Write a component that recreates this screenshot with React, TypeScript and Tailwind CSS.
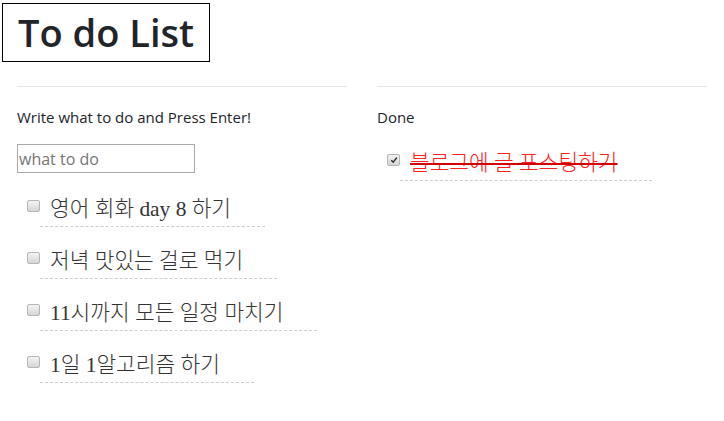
type Todo = {
    id: number;
    text: string;
    done: boolean;
};

const todos: Todo[] = [
    { id: 1, text: "영어 회화 day 8 하기", done: false },
    { id: 2, text: "저녁 맛있는 걸로 먹기", done: false },
    { id: 3, text: "11시까지 모든 일정 마치기", done: false },
    { id: 4, text: "1일 1알고리즘 하기", done: false },
    { id: 5, text: "블로그에 글 포스팅하기", done: true },
];

function Box({ checked }: { checked: boolean }) {
    return (
        <span className="mt-[5px] ml-[10px] flex h-[12px] w-[13px] shrink-0 items-center justify-center rounded-[2px] border border-[#b5b5b5] bg-gradient-to-b from-[#f4f4f4] to-[#d6d6d6]">
            {checked && (
                <svg viewBox="0 0 10 10" className="h-[8px] w-[8px]">
                    <path
                        d="M1.5 5.2 L4 7.6 L8.6 1.8"
                        fill="none"
                        stroke="#333"
                        strokeWidth={1.8}
                    />
                </svg>
            )}
        </span>
    );
}

function Item({ todo }: { todo: Todo }) {
    return (
        <li className="mb-[20px] flex items-start">
            <Box checked={todo.done} />
            <span
                className={`inline-block border-b border-dashed border-[#cfcfcf] pr-[34px] pb-[3px] pl-[10px] text-[21.4px] leading-[28px] font-light font-['Liberation_Serif','Noto_Sans_CJK_KR',serif] ${
                    todo.done
                        ? "text-[#ff2020] line-through decoration-[#d40000] decoration-2"
                        : "text-[#333]"
                }`}
            >
                {todo.text}
            </span>
        </li>
    );
}

export default function App() {
    const pending = todos.filter((t) => !t.done);
    const finished = todos.filter((t) => t.done);

    return (
        <div className="min-h-[421px] bg-white font-['Open_Sans',sans-serif] text-[#212529]">
            <h1 className="mt-[3px] ml-[2px] inline-block border border-black px-[15px] py-[4px] text-[38px] leading-[49px] font-semibold">
                To do List
            </h1>
            <div className="mt-[24px] flex gap-[30px] px-[17px]">
                <div className="flex-1">
                    <hr className="border-[#e6e6e6]" />
                    <p className="mt-[20px] text-[15px] leading-[20px]">
                        Write what to do and Press Enter!
                    </p>
                    <input
                        placeholder="what to do"
                        className="mt-[17px] h-[29px] w-[178px] border border-[#a9a9a9] px-[1px] text-[16px] placeholder:text-[#757575] focus:outline-none"
                    />
                    <ul className="mt-[22px]">
                        {pending.map((t) => (
                            <Item key={t.id} todo={t} />
                        ))}
                    </ul>
                </div>
                <div className="flex-1">
                    <hr className="border-[#e6e6e6]" />
                    <p className="mt-[20px] text-[15px] leading-[20px]">Done</p>
                    <ul className="mt-[22px]">
                        {finished.map((t) => (
                            <Item key={t.id} todo={t} />
                        ))}
                    </ul>
                </div>
            </div>
        </div>
    );
}
